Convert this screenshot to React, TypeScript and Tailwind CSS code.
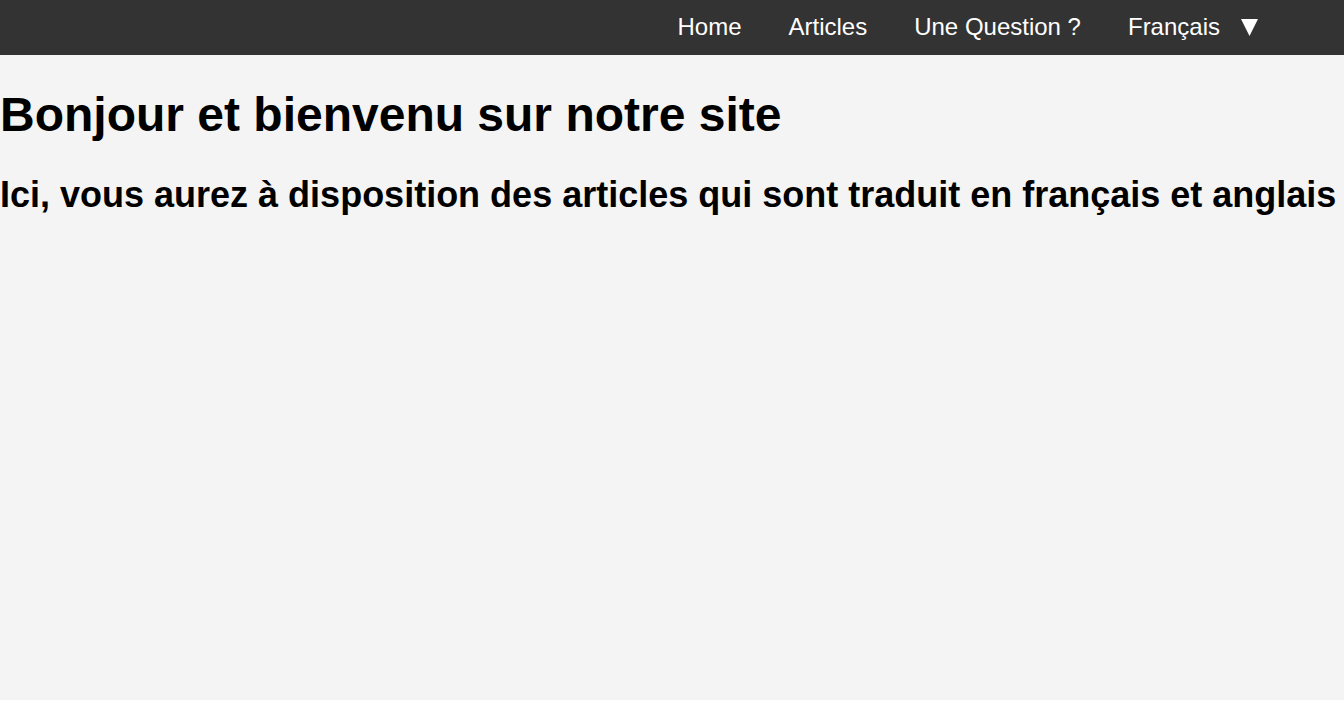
const navLinks = ['Home', 'Articles', 'Une Question ?']

function LanguageMenu() {
  return (
    <li className="flex items-center pl-[23.5px]">
      <span>Français</span>
      {/* dropdown caret */}
      <svg className="ml-[21px] mt-[1px]" width="17" height="17" viewBox="0 0 17 17" fill="white">
        <polygon points="0,0 17,0 8.5,17" />
      </svg>
    </li>
  )
}

export default function App() {
  return (
    <div className="h-[700px] bg-[#f4f4f4] text-black font-['Liberation_Sans',Arial,sans-serif]">
      {/* Top navigation */}
      <nav className="h-[55px] bg-[#333333] flex justify-end items-center pr-[86px] pb-[2px]">
        <ul className="flex items-center text-white text-[24px] leading-[normal]">
          {navLinks.map((link) => (
            <li key={link} className="px-[23.5px]">
              <a href="#">{link}</a>
            </li>
          ))}
          <LanguageMenu />
        </ul>
      </nav>

      {/* Welcome */}
      <main>
        <h1 className="mt-[32px] mb-[32px] text-[48px] font-bold leading-[normal]">
          Bonjour et bienvenu sur notre site
        </h1>
        <h2 className="text-[36px] font-bold leading-[normal] whitespace-nowrap">
          Ici, vous aurez à disposition des articles qui sont traduit en français et anglais
        </h2>
      </main>
    </div>
  )
}
